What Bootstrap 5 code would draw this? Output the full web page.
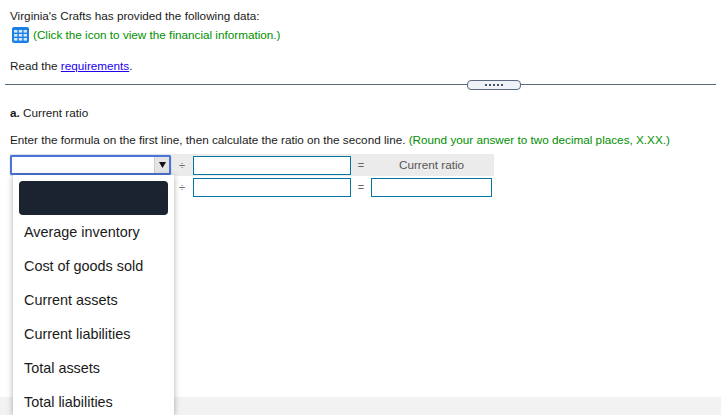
<!DOCTYPE html>
<html><head><meta charset="utf-8">
<link href="https://cdn.jsdelivr.net/npm/bootstrap@5.3.0/dist/css/bootstrap.min.css" rel="stylesheet">
<style>
html,body{height:415px;overflow:hidden}
body{font-family:"Liberation Sans",Arial,sans-serif;font-size:11.72px;line-height:14px;color:#1a1a1a;background:#fff;display:flex;flex-direction:column}
.stage{flex:1 1 auto;min-height:0;padding:9px 0 0 10px;position:relative}
.foot-band{flex:0 0 18px;background:#f2f2f2}
.hint{color:#008f00}
.line-one{height:14px}
.line-two{height:14px;margin-top:5px;gap:4px;padding-left:2px}
.line-read{margin-top:17px;height:14px}
.req-link{color:#2200ee}
.divider{height:0;border-top:1px solid #5c6b80;margin:11px 0 0 -5px;position:relative;width:711px}
.grip{position:absolute;left:462px;top:-5px;width:54px;height:10px;background:#eff2f6;border:1px solid #5c6b80;border-radius:4px;display:flex;align-items:center;justify-content:center;gap:2px}
.grip i{width:2px;height:2px;background:#44546a;display:block}
.part{margin-top:21px;height:14px}
.instr{margin-top:13px;height:14px}
.fgrid{margin-top:7px;width:484px}
.frow{height:22px;display:flex;align-items:center}
.frow.shade{background:#ebebeb}
.sel{width:161px;height:20px;border:2px solid #4a75d6;border-radius:2px;background:#fff;display:flex;justify-content:flex-end;box-shadow:0 0 1px #4a75d6}
.sel-btn{width:15px;height:16px;background:#e4e4e4;border-left:1px solid #ccc;display:flex;align-items:center;justify-content:center}
.sel-btn svg{display:block}
.sp1{width:161px}
.op{width:22px;text-align:center;color:#666;font-size:11px}
.op-eq{width:20px}
.ipt{width:158px;height:19px;border:1px solid #04789f;background:#fff}
.ipt2{width:121px;height:19px;border:1px solid #04789f;background:#fff}
.lbl{width:121px;text-align:center;color:#555}
.menu-panel{position:absolute;left:13px;top:175px;width:161px;background:#fff;padding:6px 6px 0;box-shadow:0 1px 6px rgba(0,0,0,.32);height:240px;overflow:hidden;z-index:5;font-size:14.4px;line-height:18px;color:#1a1a1a}
.masked{height:34px;background:#1b2230;border-radius:4px}
.opt{height:34px;padding:8px 0 0 5px}
</style></head>
<body>
<div class="stage">
  <div class="line-one">Virginia's Crafts has provided the following data:</div>
  <div class="line-two d-flex align-items-center">
    <svg width="17" height="16" viewBox="0 0 17 16" class="flex-shrink-0"><rect width="17" height="16" rx="2" fill="#1a80e8"/><g fill="#d6e8fa"><rect x="2" y="3" width="3.4" height="2.6"/><rect x="6.8" y="3" width="3.4" height="2.6"/><rect x="11.6" y="3" width="3.4" height="2.6"/><rect x="2" y="7" width="3.4" height="2.6"/><rect x="6.8" y="7" width="3.4" height="2.6"/><rect x="11.6" y="7" width="3.4" height="2.6"/><rect x="2" y="11" width="3.4" height="2.6"/><rect x="6.8" y="11" width="3.4" height="2.6"/><rect x="11.6" y="11" width="3.4" height="2.6"/></g></svg>
    <span class="hint">(Click the icon to view the financial information.)</span>
  </div>
  <div class="line-read">Read the <a href="#" class="req-link">requirements</a>.</div>
  <div class="divider"><div class="grip"><i></i><i></i><i></i><i></i><i></i></div></div>
  <div class="part"><b>a.</b> Current ratio</div>
  <div class="instr">Enter the formula on the first line, then calculate the ratio on the second line. <span class="hint">(Round your answer to two decimal places, X.XX.)</span></div>
  <div class="fgrid">
    <div class="frow shade">
      <div class="sel"><div class="sel-btn"><svg width="7" height="6" viewBox="0 0 7 6"><path d="M0 0H7L3.5 6Z" fill="#111"/></svg></div></div>
      <div class="op">÷</div><div class="ipt"></div><div class="op op-eq">=</div><div class="lbl">Current ratio</div>
    </div>
    <div class="frow">
      <div class="sp1"></div>
      <div class="op">÷</div><div class="ipt"></div><div class="op op-eq">=</div><div class="ipt2"></div>
    </div>
  </div>
  <div class="menu-panel">
    <div class="masked"></div>
    <div class="opt">Average inventory</div>
    <div class="opt">Cost of goods sold</div>
    <div class="opt">Current assets</div>
    <div class="opt">Current liabilities</div>
    <div class="opt">Total assets</div>
    <div class="opt">Total liabilities</div>
  </div>
</div>
<div class="foot-band"></div>
<script src="https://cdn.jsdelivr.net/npm/bootstrap@5.3.0/dist/js/bootstrap.bundle.min.js"></script>
</body></html>
